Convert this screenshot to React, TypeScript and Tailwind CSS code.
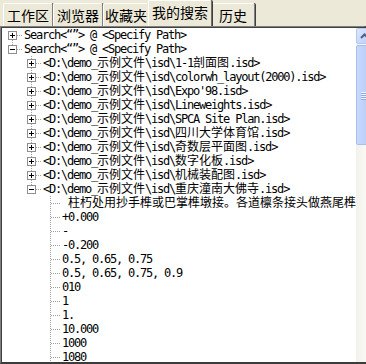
import React from "react";

type Row = { lvl: number; box?: "+" | "-"; text: string; first?: boolean; last?: boolean };

const ROWS: Row[] = [
  { lvl: 0, box: "+", text: "Search<“”> @ <Specify Path>", first: true },
  { lvl: 0, box: "-", text: "Search<“”> @ <Specify Path>", last: true },
  { lvl: 1, box: "+", text: "<D:\\demo_示例文件\\isd\\1-1剖面图.isd>" },
  { lvl: 1, box: "+", text: "<D:\\demo_示例文件\\isd\\colorwh_layout(2000).isd>" },
  { lvl: 1, box: "+", text: "<D:\\demo_示例文件\\isd\\Expo'98.isd>" },
  { lvl: 1, box: "+", text: "<D:\\demo_示例文件\\isd\\Lineweights.isd>" },
  { lvl: 1, box: "+", text: "<D:\\demo_示例文件\\isd\\SPCA Site Plan.isd>" },
  { lvl: 1, box: "+", text: "<D:\\demo_示例文件\\isd\\四川大学体育馆.isd>" },
  { lvl: 1, box: "+", text: "<D:\\demo_示例文件\\isd\\奇数层平面图.isd>" },
  { lvl: 1, box: "+", text: "<D:\\demo_示例文件\\isd\\数字化板.isd>" },
  { lvl: 1, box: "+", text: "<D:\\demo_示例文件\\isd\\机械装配图.isd>" },
  { lvl: 1, box: "-", text: "<D:\\demo_示例文件\\isd\\重庆潼南大佛寺.isd>", last: true },
  { lvl: 2, text: " 柱朽处用抄手榫或巴掌榫墩接。各道檩条接头做燕尾榫" },
  { lvl: 2, text: "+0.000" },
  { lvl: 2, text: "-" },
  { lvl: 2, text: "-0.200" },
  { lvl: 2, text: "0.5, 0.65, 0.75" },
  { lvl: 2, text: "0.5, 0.65, 0.75, 0.9" },
  { lvl: 2, text: "010" },
  { lvl: 2, text: "1" },
  { lvl: 2, text: "1." },
  { lvl: 2, text: "10.000" },
  { lvl: 2, text: "1000" },
  { lvl: 2, text: "1080" },
];

const TABS = [
  { label: "工作区", w: "w-[50px]" },
  { label: "浏览器", w: "w-[50px]" },
  { label: "收藏夹", w: "w-[46px]" },
  { label: "我的搜索", w: "w-[64px]", active: true },
  { label: "历史", w: "w-[44px]" },
];

// splits CJK runs so they get the double width of the mono ascii
function Txt({ s }: { s: string }) {
  const parts = s.split(/([\u2E80-\u9FFF\u3000-\u303F\uFF00-\uFFEF]+)/);
  return (
    <>
      {parts.map((p, i) =>
        i % 2 ? (
          <span key={i} className="font-['Noto_Sans_CJK_SC',sans-serif] text-[12px] leading-[12px] tracking-normal">
            {p}
          </span>
        ) : (
          <span key={i}>{p}</span>
        )
      )}
    </>
  );
}

const Guides = ({ row }: { row: Row }) => {
  const c = 10 + 19 * row.lvl;
  const w = c + 12;
  const dot = { stroke: "#a0a0a0", strokeDasharray: "1 1", strokeWidth: 1 };
  return (
    <svg width={w} height={14} shapeRendering="crispEdges" className="shrink-0">
      {!row.first && <line x1={c + 0.5} y1={0} x2={c + 0.5} y2={7} {...dot} />}
      {!row.last && <line x1={c + 0.5} y1={8} x2={c + 0.5} y2={14} {...dot} />}
      <line x1={c + 1} y1={7.5} x2={c + 10} y2={7.5} {...dot} />
      {row.box && (
        <g>
          <rect x={c - 3.5} y={3.5} width={8} height={8} fill="#fff" stroke="#8f8f8f" />
          <line x1={c - 2} y1={7.5} x2={c + 3} y2={7.5} stroke="#000" />
          {row.box === "+" && <line x1={c + 0.5} y1={5} x2={c + 0.5} y2={10} stroke="#000" />}
        </g>
      )}
    </svg>
  );
};

const Scrollbar = () => (
  <div className="w-[16px] shrink-0 flex flex-col bg-gradient-to-r from-[#f3f1ea] to-[#fdfdfa]">
    <div className="h-[16px] rounded-[2px] border border-[#b7c9f3] bg-gradient-to-br from-[#dde7fe] to-[#b8cdf9] flex items-center justify-center">
      <svg width="9" height="6" viewBox="0 0 9 6">
        <path d="M1 5 L4.5 1.5 L8 5" fill="none" stroke="#4d6185" strokeWidth="2" />
      </svg>
    </div>
    <div className="mt-[1px] h-[100px] rounded-[2px] border border-[#a8bdf0] bg-gradient-to-r from-[#c9d8fc] to-[#b5cbf9] flex flex-col items-center justify-center gap-[1px]">
      {[0, 1, 2, 3].map((i) => (
        <div key={i} className="w-[6px] h-[1px] bg-[#eef3fe] shadow-[0_1px_0_#8eaaf0]" />
      ))}
    </div>
  </div>
);

export default function App() {
  return (
    <div className="w-[366px] h-[364px] bg-[#ece9d8] flex flex-col overflow-hidden">
      <div className="h-[26px] flex items-end pl-[3px] shrink-0">
        {TABS.map((t) => (
          <div
            key={t.label}
            className={
              t.active
                ? `${t.w} h-[26px] -mx-[1px] z-10 flex items-center justify-center pb-[3px] border-t border-l border-white border-r border-r-[#716f64] shadow-[1px_0_0_#404040] rounded-t-[2px] bg-[#ece9d8] text-[14px] text-black font-['Noto_Sans_CJK_SC',sans-serif]`
                : `${t.w} h-[23px] flex items-center justify-center border-t border-l border-white border-r border-r-[#808080] shadow-[1px_0_0_#404040] rounded-t-[2px] bg-[#ece9d8] text-[14px] text-black font-['Noto_Sans_CJK_SC',sans-serif]`
            }
          >
            {t.label}
          </div>
        ))}
      </div>
      <div className="flex-1 min-h-0 flex border-t border-l border-[#808080] border-r-2 border-r-[#3c3c3c] border-b-2 border-b-[#3c3c3c]">
        <div className="flex-1 min-h-0 flex border-t border-l border-[#404040] border-r border-r-[#ece9d8]">
          <div className="flex-1 min-w-0 bg-white overflow-hidden">
            {ROWS.map((r, i) => (
              <div
                key={i}
                className="h-[14px] flex items-center whitespace-pre text-[12px] leading-[14px] tracking-[-1.22px] text-black font-['DejaVu_Sans_Mono','Noto_Sans_CJK_SC',monospace]"
              >
                <Guides row={r} />
                <span>
                  <Txt s={r.text} />
                </span>
              </div>
            ))}
          </div>
          <Scrollbar />
        </div>
      </div>
    </div>
  );
}
